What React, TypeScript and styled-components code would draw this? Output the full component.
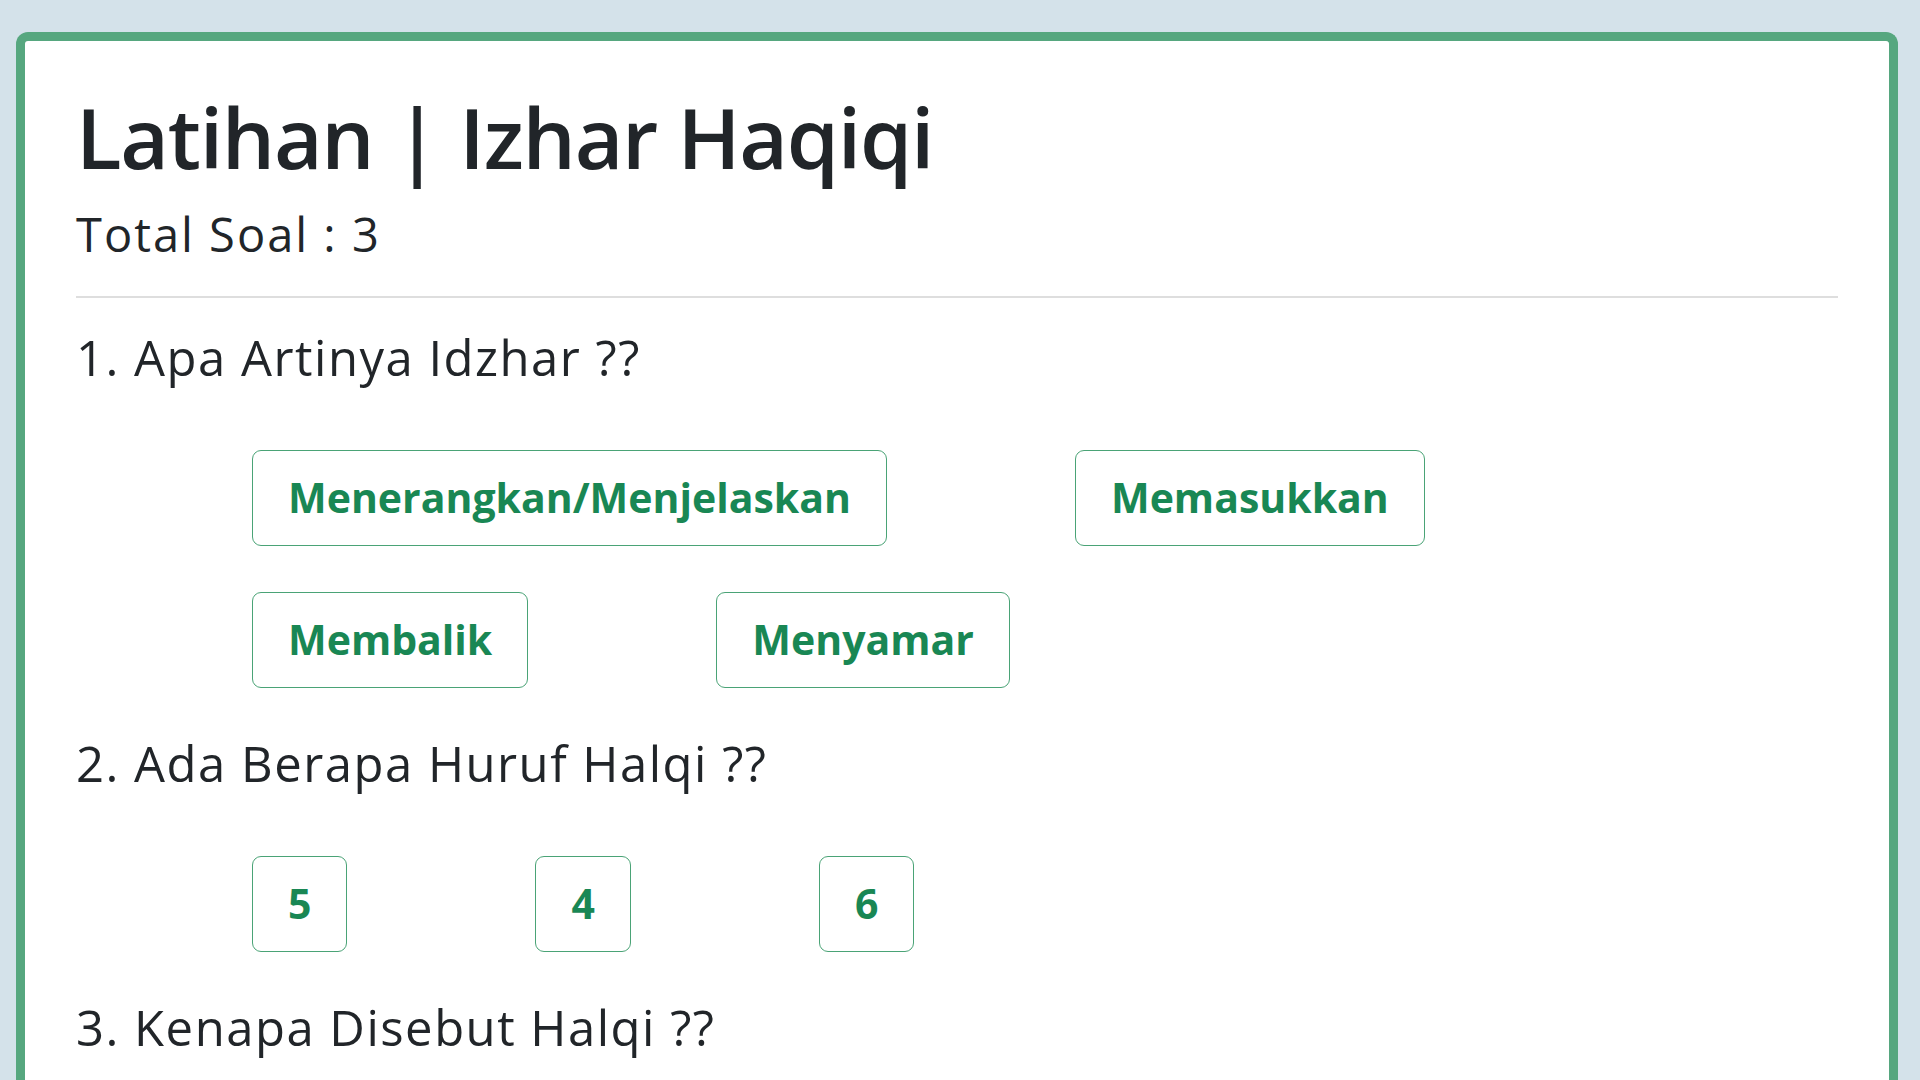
import React from 'react';
import styled, { createGlobalStyle } from 'styled-components';

const Global = createGlobalStyle`
  html, body { margin: 0; padding: 0; background: #d4e2ea; }
  body { font-family: "Open Sans", "Noto Sans", sans-serif; color: #212529; }
  * { box-sizing: border-box; }
`;

const Page = styled.div`
  height: 1080px;
  overflow: hidden;
  padding: 32px 22px 0 16px;
`;

const Card = styled.section`
  background: #fff;
  border: 9px solid #56a77f;
  border-bottom: none;
  border-radius: 12px 12px 0 0;
  padding: 46px 51px 0 51px;
  min-height: 1100px;
`;

const Title = styled.h1`
  margin: 0;
  font-size: 84px;
  font-weight: 600;
  line-height: 1.2;
  letter-spacing: -1.3px;
`;

const Subtitle = styled.p`
  margin: 18px 0 0;
  font-size: 47px;
  font-weight: 400;
  line-height: 1.2;
  letter-spacing: 2px;
`;

const Divider = styled.hr`
  margin: 34px 0 0;
  border: none;
  border-top: 2px solid #dedede;
`;

const Question = styled.h2`
  margin: 30px 0 0;
  font-size: 49px;
  font-weight: 400;
  line-height: 1.2;
  letter-spacing: 1.5px;
`;

const Options = styled.div`
  display: flex;
  flex-wrap: wrap;
  column-gap: 188px;
  row-gap: 46px;
  padding-left: 176px;
  margin: 63px 0 46px;
`;

const Option = styled.button`
  height: 96px;
  padding: 0 35px;
  border: 1px solid #4aa376;
  border-radius: 9px;
  background: #fff;
  color: #198754;
  font-family: inherit;
  font-size: 41px;
  font-weight: 700;
  line-height: 1;
  cursor: pointer;
`;

const quiz = [
  { q: '1. Apa Artinya Idzhar ??', options: ['Menerangkan/Menjelaskan', 'Memasukkan', 'Membalik', 'Menyamar'] },
  { q: '2. Ada Berapa Huruf Halqi ??', options: ['5', '4', '6'] },
  { q: '3. Kenapa Disebut Halqi ??', options: [] as string[] },
];

export default function App() {
  return (
    <>
      <Global />
      <Page>
        <Card>
          <Title>Latihan | Izhar Haqiqi</Title>
          <Subtitle>Total Soal : 3</Subtitle>
          <Divider />
          {quiz.map((item) => (
            <div key={item.q}>
              <Question>{item.q}</Question>
              {item.options.length > 0 && (
                <Options>
                  {item.options.map((o) => (
                    <Option key={o}>{o}</Option>
                  ))}
                </Options>
              )}
            </div>
          ))}
        </Card>
      </Page>
    </>
  );
}
